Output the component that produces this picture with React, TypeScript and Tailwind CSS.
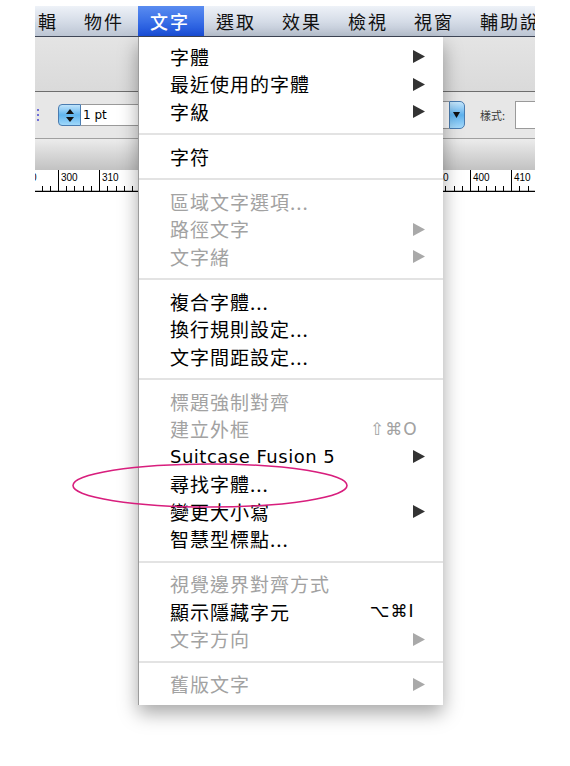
import React from 'react';

const cjk = { fontFamily: '"Noto Sans CJK TC", "Noto Sans CJK SC", sans-serif' };
const latin = { fontFamily: '"DejaVu Sans", "Noto Sans", sans-serif' };

type Item =
    | { sep: true }
    | {
          sep?: false;
          label: string;
          disabled?: boolean;
          submenu?: boolean;
          shortcut?: string;
          latin?: boolean;
      };

const menuItems: Item[] = [
    { label: '字體', submenu: true },
    { label: '最近使用的字體', submenu: true },
    { label: '字級', submenu: true },
    { sep: true },
    { label: '字符' },
    { sep: true },
    { label: '區域文字選項...', disabled: true },
    { label: '路徑文字', disabled: true, submenu: true },
    { label: '文字緒', disabled: true, submenu: true },
    { sep: true },
    { label: '複合字體...' },
    { label: '換行規則設定...' },
    { label: '文字間距設定...' },
    { sep: true },
    { label: '標題強制對齊', disabled: true },
    { label: '建立外框', disabled: true, shortcut: '⇧⌘O' },
    { label: 'Suitcase Fusion 5', submenu: true, latin: true },
    { label: '尋找字體...' },
    { label: '變更大小寫', submenu: true },
    { label: '智慧型標點...' },
    { sep: true },
    { label: '視覺邊界對齊方式', disabled: true },
    { label: '顯示隱藏字元', shortcut: '⌥⌘I' },
    { label: '文字方向', disabled: true, submenu: true },
    { sep: true },
    { label: '舊版文字', disabled: true, submenu: true },
];

const menuBar = ['編輯', '物件', '文字', '選取', '效果', '檢視', '視窗', '輔助說明'];

export default function App() {
    return (
        <div className="relative h-[766px] w-[570px] overflow-hidden bg-white">
            <AppWindow />
            <TypeMenu />
            <svg
                className="pointer-events-none absolute left-[70px] top-[461px]"
                width="282"
                height="50"
                viewBox="0 0 282 50"
            >
                <ellipse
                    cx="140"
                    cy="24.5"
                    rx="137"
                    ry="21.5"
                    fill="none"
                    stroke="#d81e7d"
                    strokeWidth="1.6"
                />
            </svg>
        </div>
    );
}

function AppWindow() {
    return (
        <div className="ml-[35px] w-[500px] overflow-hidden pt-[6px]">
            <MenuBar />

            <div className="h-[55px] border-b border-[#6e6e6e] bg-gradient-to-b from-[#e4e4e4] to-[#dadada]" />

            <ControlBar />

            <div className="h-[32px] border-t border-[#a0a0a0] bg-gradient-to-b from-[#ececec] to-[#c2c2c2]" />

            <Ruler />

            <div className="h-[12px] bg-white" />
        </div>
    );
}

function MenuBar() {
    return (
        <div className="h-[31px] border-b border-[#3f4656] bg-gradient-to-b from-[#eef2f8] via-[#d6dde8] to-[#bcc5d3]">
            <div className="-ml-[29px] flex h-full">
                {menuBar.map((label, index) => (
                    <div
                        key={index}
                        className={
                            index === 2
                                ? 'flex h-full w-[66px] shrink-0 items-center whitespace-nowrap bg-gradient-to-b from-[#5a8cf0] to-[#1a4fdc] pl-[12px] text-[18px] font-medium text-white'
                                : 'flex h-full w-[66px] shrink-0 items-center whitespace-nowrap pl-[12px] text-[18px] text-[#111]'
                        }
                        style={cjk}
                    >
                        <span className="tracking-[2px]">{label}</span>
                    </div>
                ))}
            </div>
        </div>
    );
}

function ControlBar() {
    return (
        <div className="flex h-[46px] items-center bg-[#e7e7e7]">
            {/* dotted label leftover */}
            <div className="ml-[2px] flex w-[2px] flex-col gap-[3px]">
                <span className="h-[2px] w-[2px] bg-[#6f6fd8]" />
                <span className="h-[2px] w-[2px] bg-[#6f6fd8]" />
                <span className="h-[2px] w-[2px] bg-[#6f6fd8]" />
            </div>

            <div className="ml-[19px] flex h-[22px] items-stretch">
                <div className="flex w-[23px] flex-col items-center justify-center gap-[3px] rounded-l-[4px] border border-[#4a7cb0] bg-gradient-to-b from-[#bfe4fb] via-[#5fb4ee] to-[#9fd8fa]">
                    <svg width="8" height="5" viewBox="0 0 8 5">
                        <polygon points="4,0 8,5 0,5" fill="#111" />
                    </svg>
                    <svg width="8" height="5" viewBox="0 0 8 5">
                        <polygon points="0,0 8,0 4,5" fill="#111" />
                    </svg>
                </div>
                <div
                    className="flex w-[60px] items-center border border-l-0 border-[#9a9a9a] bg-white pl-[2px] text-[12px] text-black"
                    style={latin}
                >
                    1 pt
                </div>
            </div>

            <div className="flex-1" />

            <div className="flex h-[28px] items-stretch">
                <div className="w-[17px] border border-r-0 border-[#9a9a9a] bg-white" />
                <div className="flex w-[16px] items-center justify-center rounded-r-[5px] border border-[#4a7cb0] bg-gradient-to-b from-[#c5e7fc] via-[#5db2ee] to-[#a5dafb]">
                    <svg width="7" height="6" viewBox="0 0 7 6">
                        <polygon points="0,0 7,0 3.5,6" fill="#111" />
                    </svg>
                </div>
            </div>

            <span className="ml-[15px] text-[11px] text-[#3a3a3a]" style={cjk}>
                樣式:
            </span>

            <div className="ml-[10px] h-[28px] w-[20px] shrink-0 border border-r-0 border-[#9a9a9a] bg-white" />
        </div>
    );
}

function Ruler() {
    const unit = 4.12;
    const origin = 23; // x of 300 within the ruler
    const ticks: number[] = [];
    for (let v = 286; v <= 414; v += 2) ticks.push(v);

    return (
        <svg className="block" width="500" height="22" viewBox="0 0 500 22">
            <rect width="500" height="22" fill="#ffffff" />
            {ticks.map((v) => {
                const x = Math.round(origin + (v - 300) * unit) + 0.5;
                const major = v % 10 === 0;
                return (
                    <line
                        key={v}
                        x1={x}
                        x2={x}
                        y1={major ? 0 : 16}
                        y2={21}
                        stroke="#000"
                        strokeWidth="1"
                    />
                );
            })}
            {[290, 300, 310, 320, 380, 390, 400, 410].map((v) => (
                <text
                    key={v}
                    x={Math.round(origin + (v - 300) * unit) + 3}
                    y="11"
                    fontSize="10"
                    fill="#000"
                    style={{ fontFamily: '"Liberation Sans", sans-serif' }}
                >
                    {v}
                </text>
            ))}
            <line x1="0" x2="500" y1="21.5" y2="21.5" stroke="#000" strokeWidth="1.5" />
        </svg>
    );
}

function Arrow({ disabled }: { disabled?: boolean }) {
    return (
        <svg width="12" height="13" viewBox="0 0 12 13">
            <polygon points="0,0 12,6.5 0,13" fill={disabled ? '#a9a9a9' : '#333333'} />
        </svg>
    );
}

function TypeMenu() {
    return (
        <div className="absolute left-[138px] top-[37px] w-[305px] border-l border-[#9c9c9c] bg-white pb-[7px] pt-[6px] shadow-[0_8px_18px_rgba(0,0,0,0.35)]">
            {menuItems.map((item, index) =>
                item.sep ? (
                    <div key={index} className="flex h-[17.5px] items-center">
                        <div className="h-[2px] w-full bg-[#e3e3e3]" />
                    </div>
                ) : (
                    <div
                        key={index}
                        className={
                            item.disabled
                                ? 'flex h-[27.5px] items-center pl-[31px] pr-[18px] text-[#a2a2a2]'
                                : 'flex h-[27.5px] items-center pl-[31px] pr-[18px] text-black'
                        }
                    >
                        {item.latin ? (
                            <span className="flex-1 text-[18px] tracking-[0.5px]" style={latin}>
                                {item.label}
                            </span>
                        ) : (
                            <span className="flex-1 text-[19px] tracking-[1px]" style={cjk}>
                                {item.label}
                            </span>
                        )}
                        <div className="flex w-[55px] items-center justify-end">
                            {item.shortcut && (
                                <span
                                    className="w-full text-[17px] tracking-[1px]"
                                    style={latin}
                                >
                                    {item.shortcut}
                                </span>
                            )}
                            {item.submenu && <Arrow disabled={item.disabled} />}
                        </div>
                    </div>
                ),
            )}
        </div>
    );
}
